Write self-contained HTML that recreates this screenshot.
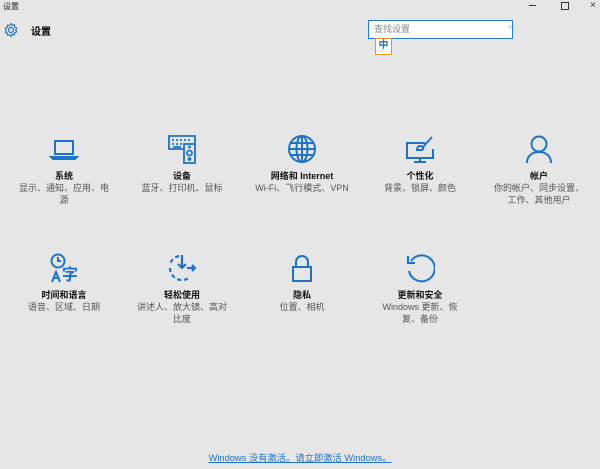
<!DOCTYPE html>
<html><head><meta charset="utf-8"><style>
body{margin:0;width:600px;height:469px;background:#e6e6e6;font-family:"Liberation Sans","Noto Sans CJK SC",sans-serif;position:relative;overflow:hidden;color:#000}
.a{position:absolute}
.t{font-size:9px;color:#222}
.item{position:absolute;width:100px;text-align:center}
.item svg{display:block;margin:0 auto}
.ti{font-size:9px;font-weight:bold;color:#111;margin-top:6px;line-height:12px}
.de{font-size:9px;color:#555;line-height:12px}
</style></head><body>
<div class="a t" style="left:3px;top:1px;font-size:8px">设置</div>
<div class="a" style="left:529px;top:5px;width:7px;height:1px;background:#333"></div>
<div class="a" style="left:561px;top:2px;width:6px;height:6px;border:1px solid #333"></div>
<div class="a" style="left:590px;top:0px;font-size:10px;color:#333">×</div>
<svg class="a" style="left:3px;top:22px" width="16" height="16" viewBox="0 0 16 16"><circle cx="8" cy="8" r="2.5" fill="none" stroke="#1e73c8" stroke-width="1.2"/><path d="M8 1.5l1.3 1.8 2.1-.6.3 2.2 2 .9-1 2 1 2-2 .9-.3 2.2-2.1-.6L8 14.5l-1.3-1.8-2.1.6-.3-2.2-2-.9 1-2-1-2 2-.9.3-2.2 2.1.6z" fill="none" stroke="#1e73c8" stroke-width="1.1"/></svg>
<div class="a" style="left:31px;top:23px;font-size:10px;font-weight:bold">设置</div>
<div class="a" style="left:368px;top:20px;width:143px;height:17px;border:1px solid #2a7ad0;background:#fff"></div>
<div class="a" style="left:374px;top:22px;font-size:9px;color:#888">查找设置</div>
<div class="a" style="left:508px;top:22px;font-size:8px;color:#999">⌕</div>
<div class="a" style="left:375px;top:38px;width:15px;height:15px;border:1px solid #e8922b;background:#fff;color:#1e73c8;font-size:10px;font-weight:bold;text-align:center;line-height:14px">中</div>

<div class="item" style="left:14px;top:134px"><svg width="30" height="30" viewBox="0 0 30 30" fill="none" stroke="#1e73c8" stroke-width="2"><rect x="6" y="7" width="18" height="13"/><path d="M2 23h26l-2 2H4z"/></svg><div class="ti">系统</div><div class="de">显示、通知、应用、电<br>源</div></div>
<div class="item" style="left:132px;top:134px"><svg width="30" height="30" viewBox="0 0 30 30" fill="none" stroke="#1e73c8" stroke-width="1.8"><path d="M17 15H2V2h26v7"/><path d="M5 6h2M9 6h2M13 6h2M17 6h2M21 6h2M5 10h2M9 10h2M13 10h2M6 13h8"/><rect x="17" y="10" width="11" height="19"/><circle cx="22.5" cy="19" r="2.5"/><circle cx="22.5" cy="25" r="1"/><circle cx="22.5" cy="13" r=".6"/></svg><div class="ti">设备</div><div class="de">蓝牙、打印机、鼠标</div></div>
<div class="item" style="left:252px;top:134px"><svg width="30" height="30" viewBox="0 0 30 30" fill="none" stroke="#1e73c8" stroke-width="2"><circle cx="15" cy="15" r="13"/><ellipse cx="15" cy="15" rx="5.5" ry="13"/><path d="M2 15h26M4 9h22M4 21h22M15 2v26"/></svg><div class="ti">网络和 Internet</div><div class="de">Wi-Fi、飞行模式、VPN</div></div>
<div class="item" style="left:370px;top:134px"><svg width="30" height="30" viewBox="0 0 30 30" fill="none" stroke="#1e73c8" stroke-width="2"><path d="M20 9H2v15h26v-9"/><path d="M15 24v4M9 28h12"/><path d="M27 3l-9 10-3-1c-2 0-3 2-3 4l4 0c2 0 3-2 2-3"/></svg><div class="ti">个性化</div><div class="de">背景、锁屏、颜色</div></div>
<div class="item" style="left:489px;top:134px"><svg width="30" height="30" viewBox="0 0 30 30" fill="none" stroke="#1e73c8" stroke-width="2"><circle cx="15" cy="10" r="7.5"/><path d="M3 29c0-7 5-11 12-11s12 4 12 11"/></svg><div class="ti">帐户</div><div class="de">你的帐户、同步设置、<br>工作、其他用户</div></div>

<div class="item" style="left:14px;top:253px"><svg width="30" height="30" viewBox="0 0 30 30" fill="none" stroke="#1e73c8" stroke-width="2"><circle cx="9" cy="8" r="6.5"/><path d="M9 4v4h3"/><path d="M3 29l4-10 4 10M4.5 25h5"/><text x="13" y="27" font-size="16" fill="#1e73c8" stroke="none" font-family="Noto Sans CJK SC" font-weight="bold">字</text></svg><div class="ti">时间和语言</div><div class="de">语音、区域、日期</div></div>
<div class="item" style="left:132px;top:253px"><svg width="30" height="30" viewBox="0 0 30 30" fill="none" stroke="#1e73c8" stroke-width="2.2"><path d="M12 3a12 12 0 0 0-9 8" stroke-dasharray="4 3"/><path d="M3 15a12 12 0 0 0 20 9" stroke-dasharray="4 3"/><path d="M15 2v13M11 11l4 4 4-4M20 15h8M25 12l3 3-3 3"/></svg><div class="ti">轻松使用</div><div class="de">讲述人、放大镜、高对<br>比度</div></div>
<div class="item" style="left:252px;top:253px"><svg width="30" height="30" viewBox="0 0 30 30" fill="none" stroke="#1e73c8" stroke-width="2"><rect x="6" y="14" width="18" height="14"/><path d="M9 14V9a6 6 0 0 1 12 0v5"/></svg><div class="ti">隐私</div><div class="de">位置、相机</div></div>
<div class="item" style="left:370px;top:253px"><svg width="30" height="30" viewBox="0 0 30 30" fill="none" stroke="#1e73c8" stroke-width="2"><path d="M6 8a13 13 0 1 1-2 10"/><path d="M3 3v7h7"/></svg><div class="ti">更新和安全</div><div class="de">Windows 更新、恢<br>复、备份</div></div>

<div class="a" style="left:0;width:600px;top:450px;text-align:center;font-size:9.3px;color:#1e73c8;text-decoration:underline">Windows 没有激活。请立即激活 Windows。</div>
</body></html>
